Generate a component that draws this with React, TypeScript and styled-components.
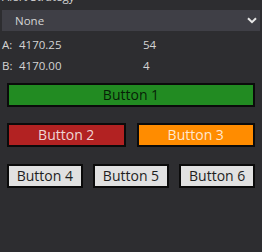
import React from "react";
import styled, { createGlobalStyle } from "styled-components";

const Global = createGlobalStyle`
  html, body { margin: 0; padding: 0; background: #2d2d30; }
  body { font-family: "Open Sans", "Noto Sans", sans-serif; overflow: hidden; }
  * { box-sizing: border-box; }
`;

const Panel = styled.div`
  width: 262px;
  height: 252px;
  padding: 0 2px;
  background: #2d2d30;
  color: #d4d4d4;
  display: flex;
  flex-direction: column;
`;

const Heading = styled.div`
  font-size: 11.5px;
  line-height: 15px;
  margin-top: -11px;
  color: #d4d4d4;
`;

const Select = styled.div`
  margin-top: 6px;
  height: 21px;
  background: #3f3f46;
  display: flex;
  align-items: center;
  justify-content: space-between;
  padding: 0 3px 0 13px;
  font-size: 11.5px;
  color: #d4d4d4;
`;

const Quotes = styled.div`
  margin-top: 3px;
  display: grid;
  grid-template-columns: 17px 124px 1fr;
  grid-auto-rows: 21px;
  align-items: center;
  font-size: 11.5px;
  color: #d4d4d4;
`;

const Buttons = styled.div`
  padding: 0 5px;
  display: flex;
  flex-direction: column;
`;

const Row = styled.div<{ $cols: number; $gap: number; $top: number }>`
  display: grid;
  grid-template-columns: repeat(${(p) => p.$cols}, 1fr);
  column-gap: ${(p) => p.$gap}px;
  margin-top: ${(p) => p.$top}px;
`;

const Btn = styled.button<{ $bg: string; $fg: string }>`
  height: 24px;
  border: 2px solid #0b0b0b;
  background: ${(p) => p.$bg};
  color: ${(p) => p.$fg};
  font-family: "Open Sans", "Noto Sans", sans-serif;
  font-size: 14px;
  line-height: 20px;
  padding: 0;
  margin: 0;
  display: flex;
  align-items: center;
  justify-content: center;
`;

const Chevron = () => (
  <svg width="10" height="7" viewBox="0 0 10 7">
    <path d="M1 1.2 L5 5.2 L9 1.2" fill="none" stroke="#e8e8e8" strokeWidth="2" />
  </svg>
);

export default function App() {
  return (
    <>
      <Global />
      <Panel>
        <Heading>Alert Strategy</Heading>
        <Select>
          <span>None</span>
          <Chevron />
        </Select>
        <Quotes>
          <span>A:</span>
          <span>4170.25</span>
          <span>54</span>
          <span>B:</span>
          <span>4170.00</span>
          <span>4</span>
        </Quotes>
        <Buttons>
          <Row $cols={1} $gap={0} $top={7}>
            <Btn $bg="#228b22" $fg="rgba(0,0,0,0.8)">Button 1</Btn>
          </Row>
          <Row $cols={2} $gap={11} $top={16}>
            <Btn $bg="#b22222" $fg="rgba(255,255,255,0.82)">Button 2</Btn>
            <Btn $bg="#ff8c00" $fg="rgba(255,255,255,0.82)">Button 3</Btn>
          </Row>
          <Row $cols={3} $gap={10.5} $top={17}>
            <Btn $bg="#e1e1e1" $fg="#1e1e1e">Button 4</Btn>
            <Btn $bg="#e1e1e1" $fg="#1e1e1e">Button 5</Btn>
            <Btn $bg="#e1e1e1" $fg="#1e1e1e">Button 6</Btn>
          </Row>
        </Buttons>
      </Panel>
    </>
  );
}
